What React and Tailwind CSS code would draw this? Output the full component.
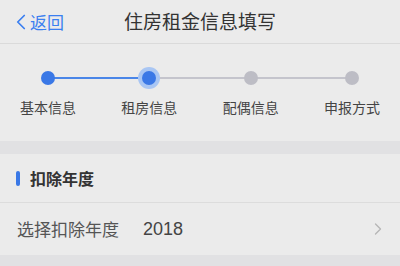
import { ChevronLeft, ChevronRight } from 'lucide-react';

const steps = ['基本信息', '租房信息', '配偶信息', '申报方式'];

export default function App() {
    const current = 1;

    return (
        <div
            className="w-[400px] h-[266px] overflow-hidden bg-[#ebebeb] text-[#333]"
            style={{ fontFamily: '"Noto Sans CJK SC", "Noto Sans", sans-serif' }}
        >
            {/* Header */}
            <div className="relative h-[44px] flex items-center justify-center border-b border-[#dadada]">
                <div className="absolute left-[8px] top-0 h-full flex items-center text-[#3b7ff0]">
                    <ChevronLeft size={26} strokeWidth={1.6} className="-mr-[4px]" />
                    <span className="text-[17px]">返回</span>
                </div>
                <h1 className="text-[19px] text-[#333]">住房租金信息填写</h1>
            </div>

            {/* Steps */}
            <div className="h-[97px] relative">
                <div className="absolute left-[48px] right-[48px] top-[33px] h-[1.5px] bg-[#c4c4cc]" />
                <div className="absolute left-[48px] w-[101px] top-[33px] h-[1.5px] bg-[#4a86e8]" />
                <div className="flex justify-between px-[7px] pt-[22px]">
                    {steps.map((s, i) => (
                        <div key={s} className="w-[82px] flex flex-col items-center">
                            <div className="h-[24px] flex items-center justify-center relative">
                                {i === current && (
                                    <div className="absolute w-[22px] h-[22px] rounded-full bg-[#a9c6f3]" />
                                )}
                                <div
                                    className={
                                        'relative w-[14px] h-[14px] rounded-full ' +
                                        (i <= current ? 'bg-[#3a78e6]' : 'bg-[#bdbdc5]')
                                    }
                                />
                            </div>
                            <span className="mt-[7px] text-[14px] text-[#444]">{s}</span>
                        </div>
                    ))}
                </div>
            </div>

            <div className="h-[13px] bg-[#e1e1e3]" />

            {/* Section */}
            <div className="h-[49px] flex items-center border-b border-[#dcdcdc]">
                <div className="ml-[16px] w-[4px] h-[15px] rounded-full bg-[#3a78e6]" />
                <span className="ml-[10px] text-[16px] font-bold text-[#333]">扣除年度</span>
            </div>
            <div className="h-[52px] flex items-center">
                <span className="ml-[17px] text-[17px] text-[#555]">选择扣除年度</span>
                <span
                    className="ml-[24px] text-[18px] text-[#444]"
                    style={{ fontFamily: '"Liberation Sans", Arial, sans-serif' }}
                >
                    2018
                </span>
                <ChevronRight size={20} strokeWidth={1.5} className="ml-auto mr-[12px] text-[#b5b5b5]" />
            </div>
            <div className="h-[20px] bg-[#e1e1e3]" />
        </div>
    );
}
